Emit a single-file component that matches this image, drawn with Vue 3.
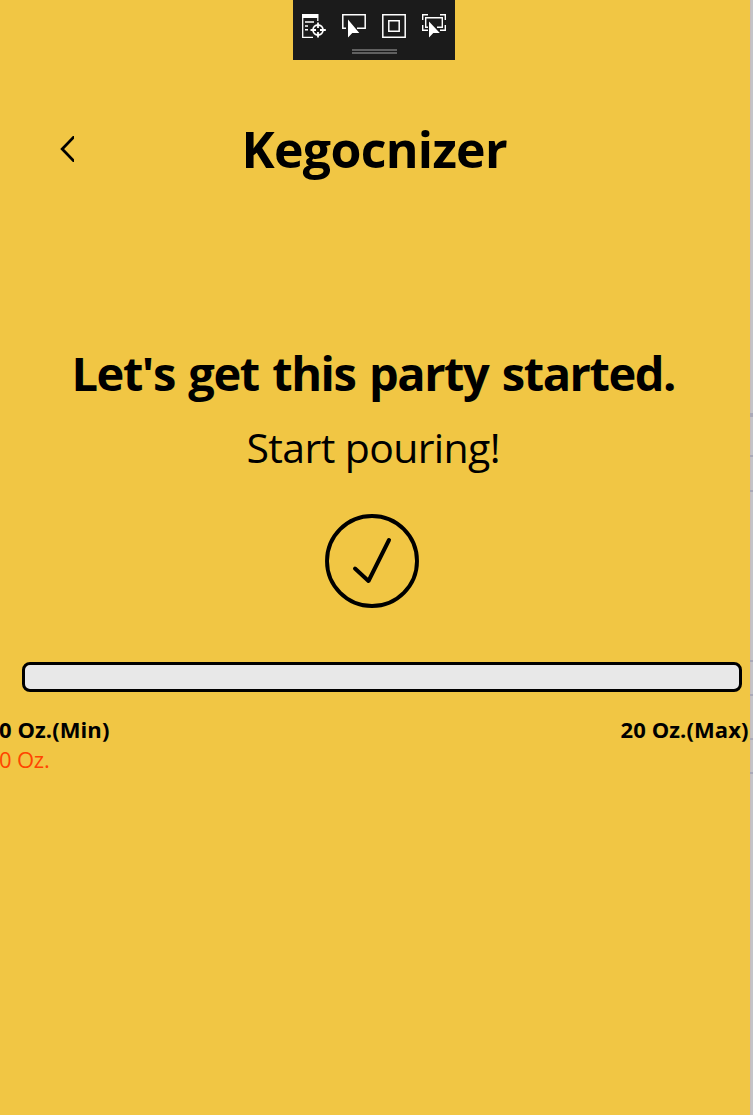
<script setup>
const ticks = [
  { top: 413, height: 4 },
  { top: 455, height: 2 },
  { top: 490, height: 2 },
  { top: 660, height: 2 },
  { top: 694, height: 2 },
  { top: 738, height: 2 },
  { top: 772, height: 2 },
]
</script>

<template>
  <div class="window">
    <main class="page">
      <div class="debugbar">
        <div class="tools">
          <svg width="24" height="24" viewBox="0 0 24 24" fill="none" stroke="#fff" stroke-width="1.3">
            <path d="M0 0H16.5V4H0Z" fill="#fff" stroke="none" />
            <path d="M.7 3V23.3H11M15.8 4V7" />
            <path d="M3 8H12M3 12H6M3 15.8H6" stroke-width="1.4" />
            <circle cx="16" cy="16" r="5" stroke-width="1.8" />
            <path d="M16 8.5V14M16 18V23.5M8.5 16H14M18 16H23.8" stroke-width="1.8" />
          </svg>
          <svg width="24" height="24" viewBox="0 0 24 24" fill="none" stroke="#fff" stroke-width="1.5">
            <path d="M4 14.2H.8V.8H23.2V14.2H15" />
            <path d="M6 5.5V23.5L10.3 19H17.3Z" fill="#fff" stroke="none" />
          </svg>
          <svg width="24" height="24" viewBox="0 0 24 24" fill="none" stroke="#fff" stroke-width="1.5">
            <path d="M.8 .8H23.2V23.2H.8Z" />
            <path d="M6.8 6.8H17.2V17.2H6.8Z" />
          </svg>
          <svg width="24" height="24" viewBox="0 0 24 24" fill="none" stroke="#fff" stroke-width="1.4">
            <path d="M.7 6V.7H6M18 .7H23.3V6M23.3 11V16.3H18M6 16.3H.7V11" />
            <path d="M6 13.2H3.7V3.7H20.3V13.2H15" />
            <path d="M7 7.5V23.5L11.3 19H17.8Z" fill="#fff" stroke="none" />
          </svg>
        </div>
        <div class="grip"></div>
      </div>

      <header class="header">
        <svg class="back" width="14" height="26" viewBox="0 0 14 26" fill="none" stroke="#000" stroke-width="2.8">
          <path d="M15 -.2L2.2 13L15 26.2" />
        </svg>
        <h1 class="title">Kegocnizer</h1>
      </header>

      <h2 class="headline">Let's get this party started.</h2>
      <p class="sub">Start pouring!</p>
      <svg class="check" width="94" height="94" viewBox="0 0 94 94" fill="none" stroke="#000">
        <circle cx="47" cy="47" r="45" stroke-width="3.9" />
        <path d="M30 54.500L43.5 67L64 26" stroke-width="4" stroke-linecap="round" stroke-linejoin="round" />
      </svg>
      <div class="meter"></div>
      <div class="range">
        <span class="min">0 Oz.(Min)</span>
        <span class="max">20 Oz.(Max)</span>
      </div>
      <p class="amount">0 Oz.</p>
    </main>
    <aside class="edge">
      <i v-for="t in ticks" :key="t.top" class="tick" :style="{ top: t.top + 'px', height: t.height + 'px' }"></i>
    </aside>
  </div>
</template>

<style>
body { background: #f1c644; }
</style>

<style scoped>
.window {
  display: flex;
  width: 753px;
  height: 1115px;
  overflow: hidden;
  background: #f1c644;
  color: #000;
  font-family: "Open Sans", "Noto Sans", sans-serif;
}
h1, h2, p { margin: 0; }
.page {
  display: flex;
  flex-direction: column;
  width: 749px;
  flex: none;
}
.debugbar {
  width: 162px;
  height: 60px;
  margin-left: 293px;
  box-sizing: border-box;
  padding: 14px 9px 0;
  background: #1b1b1b;
}
.tools { display: flex; gap: 16px; }
.tools svg { flex: none; }
.grip {
  width: 45px;
  height: 5px;
  margin: 11px 0 0 50px;
  box-sizing: border-box;
  border-top: 2px solid #606060;
  border-bottom: 2px solid #606060;
}
.header {
  display: flex;
  height: 60px;
  margin-top: 59px;
}
.back { margin: 17px 0 0 60px; flex: none; }
.title {
  margin: 0 0 0 167.500px;
  font-size: 50px;
  line-height: 60px;
  font-weight: 700;
  letter-spacing: -0.7px;
  white-space: nowrap;
}
.headline {
  margin: 164px 0 0 71.500px;
  font-size: 47px;
  line-height: 60px;
  font-weight: 700;
  letter-spacing: -1.46px;
  word-spacing: 2.800px;
  white-space: nowrap;
}
.sub {
  margin: 19px 0 0 246.500px;
  font-size: 41px;
  line-height: 50px;
  letter-spacing: -0.62px;
  white-space: nowrap;
}
.check { margin: 42px 0 0 325px; flex: none; }
.meter {
  width: 720px;
  height: 30px;
  margin: 54px 0 0 22px;
  box-sizing: border-box;
  border: 3px solid #000;
  border-radius: 8px;
  background: #e8e8e8;
  flex: none;
}
.range {
  display: flex;
  justify-content: space-between;
  margin: 22px 0.5px 0 0;
  font-size: 22px;
  line-height: 30px;
  font-weight: 700;
  letter-spacing: 0.08px;
  white-space: nowrap;
}
.min { margin-left: -1px; }
.amount {
  margin-left: -1px;
  font-size: 22px;
  line-height: 30px;
  letter-spacing: -0.2px;
  color: #ff4500;
}
.edge {
  position: relative;
  width: 4px;
  flex: none;
  background: linear-gradient(90deg, #f1c644 0 1px, #c8bcbc 1px 2px, #c4c4c8 2px);
}
.tick {
  position: absolute;
  left: 1px;
  width: 3px;
  background: #aaa9b8;
}
</style>
